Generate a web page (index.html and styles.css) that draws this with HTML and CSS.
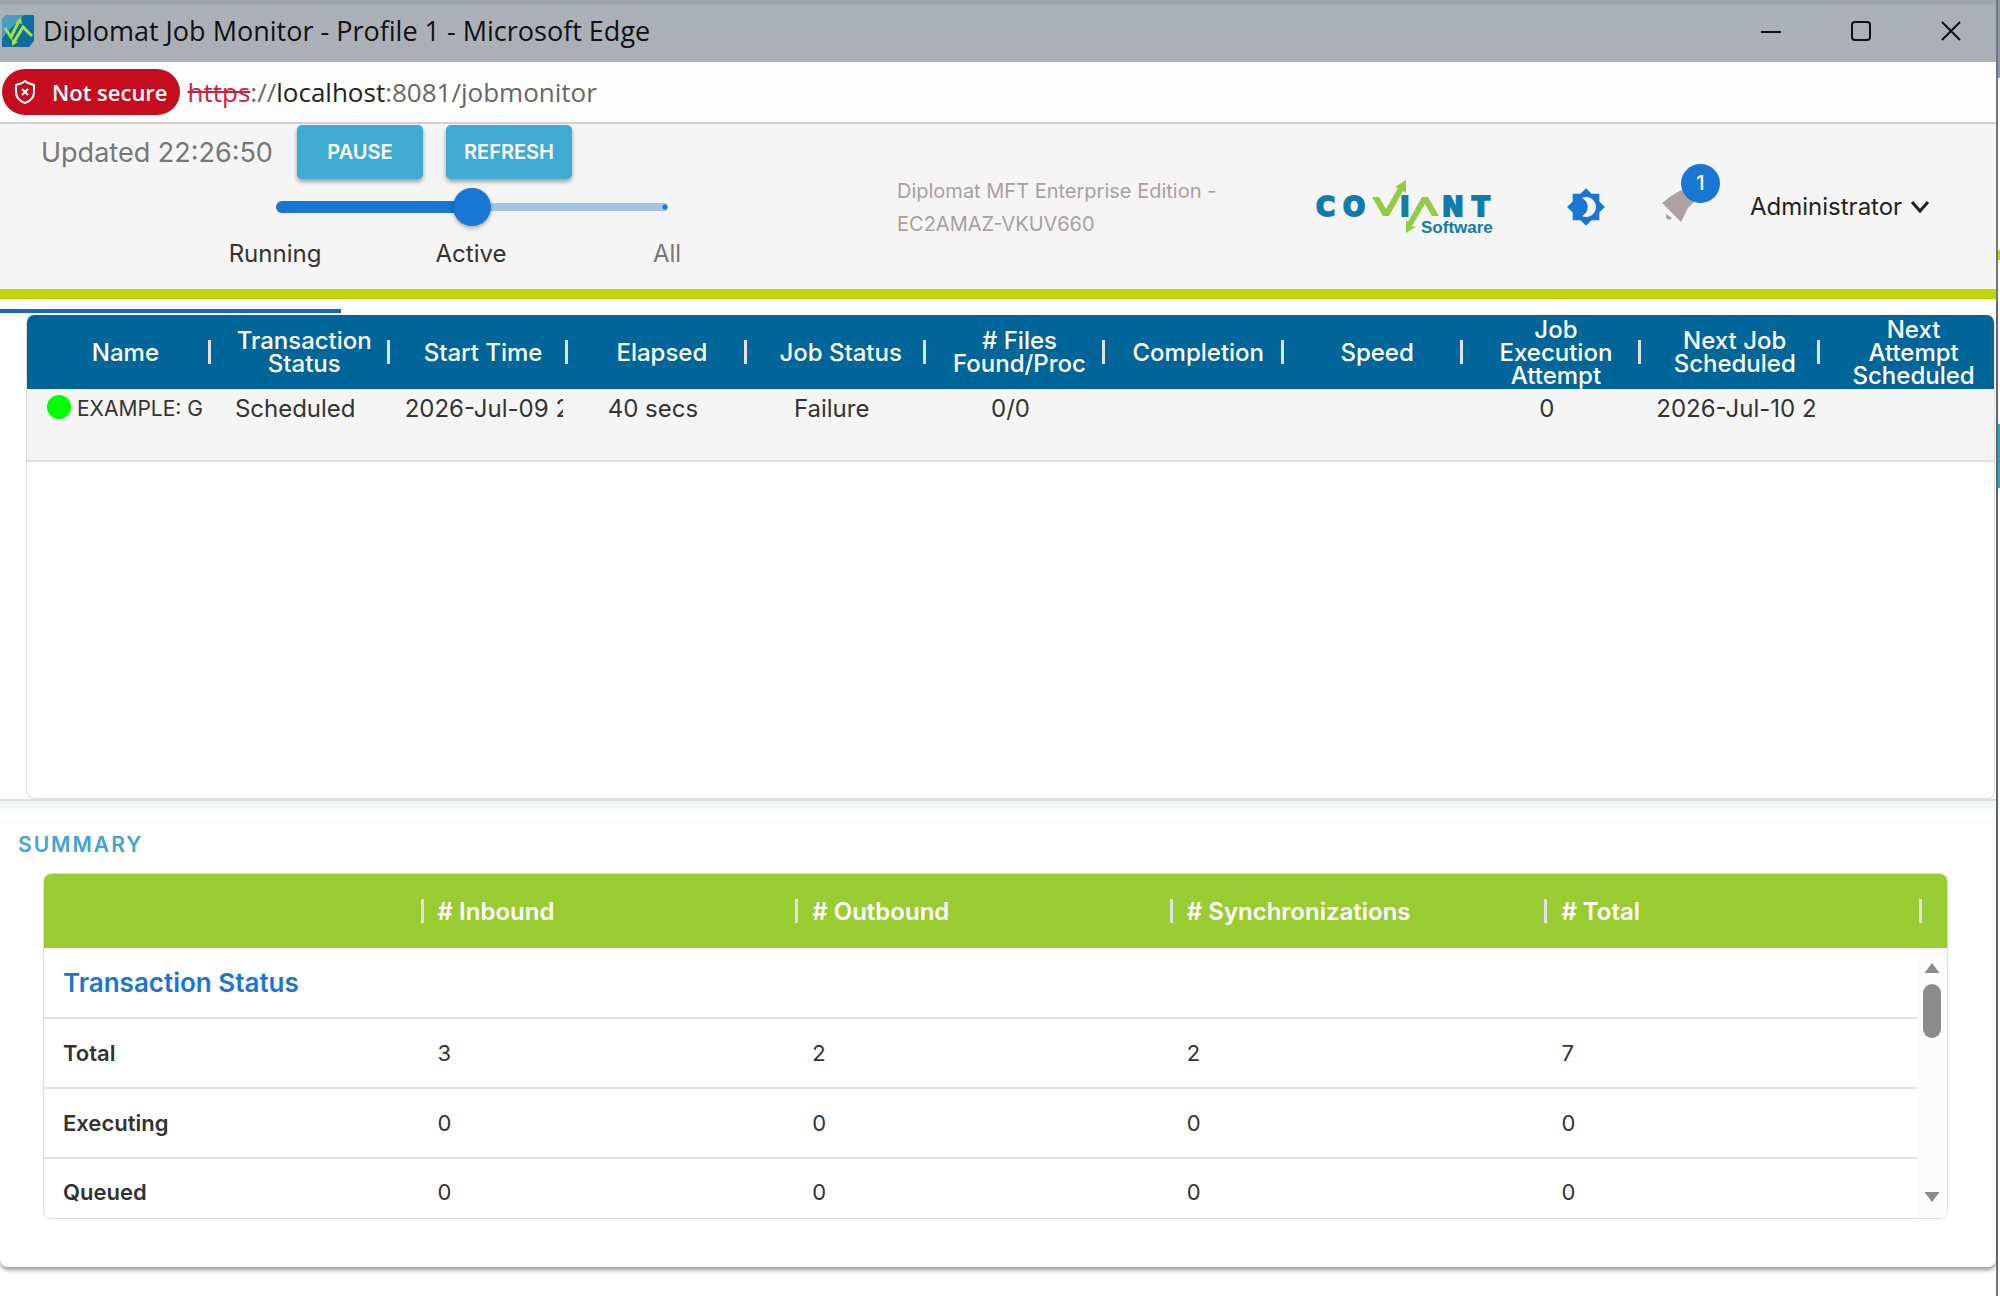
FILE: index.html
```html
<!DOCTYPE html>
<html lang="en">
<head>
    <meta charset="UTF-8">
    <meta name="viewport" content="width=device-width, initial-scale=1.0">
    <title>Diplomat Job Monitor</title>
    <link rel="stylesheet" href="styles.css">
</head>
<body>
    <div class="window">
        <!-- Title bar -->
        <div class="title-bar">
            <svg class="app-icon" viewBox="0 0 32 32">
                <path d="M4 0H32V26L27 32H0V5Z" fill="#0b6fa4"/>
                <path d="M4 0H22L4 18L0 24V5Z" fill="#4a9cc4"/>
                <path d="M3 13L9 22L17 6M12 27L21 12L30 21" fill="none" stroke="#a6e03c" stroke-width="3"/>
                <path d="M14 7L19 2L20 9ZM10 24L10 31L16 27Z" fill="#a6e03c"/>
            </svg>
            <span class="window-title">Diplomat Job Monitor - Profile 1 - Microsoft Edge</span>
            <div class="window-controls">
                <button type="button" aria-label="Minimize"><svg viewBox="0 0 20 20"><path d="M0 11H20"/></svg></button>
                <button type="button" aria-label="Maximize"><svg viewBox="0 0 20 20"><rect x="1" y="1" width="18" height="18" rx="3"/></svg></button>
                <button type="button" aria-label="Close"><svg viewBox="0 0 20 20"><path d="M1 1L19 19M19 1L1 19"/></svg></button>
            </div>
        </div>

        <!-- Address bar -->
        <div class="address-bar">
            <button type="button" class="not-secure">
                <svg viewBox="0 0 22 24">
                    <path d="M11 1L14 3L20 5V12C20 17 17 21 11 23C5 21 2 17 2 12V5L8 3Z"/>
                    <path d="M8 9L14 15M14 9L8 15"/>
                </svg>
                Not secure
            </button>
            <span class="url"><s>https</s>://<b>localhost</b>:8081/jobmonitor</span>
        </div>

        <!-- App header -->
        <header class="header">
            <div class="refresh-controls">
                <div class="refresh-row">
                    <span class="updated">Updated 22:26:50</span>
                    <button type="button" class="action-btn">PAUSE</button>
                    <button type="button" class="action-btn">REFRESH</button>
                </div>
                <input type="range" class="slider" id="job-filter" min="0" max="2" value="1" aria-label="Jobs shown">
                <div class="slider-labels">
                    <label for="job-filter">Running</label>
                    <label for="job-filter">Active</label>
                    <label for="job-filter" class="inactive">All</label>
                </div>
            </div>
            <div class="edition">Diplomat MFT Enterprise Edition -<br>EC2AMAZ-VKUV660</div>
            <svg class="logo" viewBox="0 0 180 56" role="img" aria-label="Coviant Software">
                <g class="logo-name">
                    <text x="1" y="37">C</text>
                    <text x="28" y="37">O</text>
                    <text x="85" y="37">I</text>
                    <text x="127" y="37">N</text>
                    <text x="157" y="37">T</text>
                </g>
                <text class="logo-sub" x="106" y="54">Software</text>
                <path d="M57 18H64L71 30L83 9L80 8L91 1V14L88 12L74 37H68Z" fill="#94cb45"/>
                <path d="M124 37H117L110 25L97 47L101 48L91 54V41L93 43L107 18H113Z" fill="#94cb45"/>
            </svg>
            <button type="button" class="icon-btn theme-btn" aria-label="Toggle theme">
                <svg viewBox="0 0 24 24"><path d="M20 8.69V4h-4.69L12 .69 8.69 4H4v4.69L.69 12 4 15.31V20h4.69L12 23.31 15.31 20H20v-4.69L23.31 12 20 8.69zM12 18c-.89 0-1.74-.2-2.5-.55C11.56 16.5 13 14.42 13 12s-1.44-4.5-3.5-5.45C10.26 6.2 11.11 6 12 6c3.31 0 6 2.69 6 6s-2.69 6-6 6z"/></svg>
            </button>
            <button type="button" class="icon-btn bell-btn" aria-label="Notifications">
                <svg viewBox="0 0 40 40"><path d="M1 16L10 9L20 3L34 14L27 21L20 35ZM5 27L11 31Q8 34 5 31Z"/></svg>
                <span class="badge">1</span>
            </button>
            <button type="button" class="user-menu">
                Administrator
                <svg viewBox="0 0 20 14"><path d="M2 2L10 11L18 2"/></svg>
            </button>
        </header>

        <main class="content">
            <div class="progress"><div class="progress-bar"></div></div>

            <!-- Jobs -->
            <section class="jobs">
                <table class="jobs-table">
                    <thead>
                        <tr>
                            <th>Name</th>
                            <th>Transaction Status</th>
                            <th>Start Time</th>
                            <th>Elapsed</th>
                            <th>Job Status</th>
                            <th># Files<br>Found/Proc</th>
                            <th>Completion</th>
                            <th>Speed</th>
                            <th>Job<br>Execution<br>Attempt</th>
                            <th>Next Job<br>Scheduled</th>
                            <th>Next<br>Attempt<br>Scheduled</th>
                        </tr>
                    </thead>
                    <tbody>
                        <tr>
                            <td class="job-name"><span class="dot"></span>EXAMPLE: G</td>
                            <td>Scheduled</td>
                            <td>2026-Jul-09 2</td>
                            <td>40 secs</td>
                            <td>Failure</td>
                            <td>0/0</td>
                            <td></td>
                            <td></td>
                            <td>0</td>
                            <td>2026-Jul-10 21</td>
                            <td></td>
                        </tr>
                    </tbody>
                </table>
            </section>

            <div class="splitter"></div>

            <!-- Summary -->
            <section class="summary">
                <h2>SUMMARY</h2>
                <div class="summary-grid">
                    <table class="summary-table">
                        <colgroup>
                            <col><col><col><col><col>
                            <col class="scroll-col">
                        </colgroup>
                        <thead>
                            <tr>
                                <th></th>
                                <th># Inbound</th>
                                <th># Outbound</th>
                                <th># Synchronizations</th>
                                <th># Total</th>
                                <th></th>
                            </tr>
                        </thead>
                        <tbody>
                            <tr>
                                <th colspan="5" class="group">Transaction Status</th>
                                <td rowspan="4" class="scroll-cell">
                                    <div class="scrollbar">
                                        <svg viewBox="0 0 18 12"><path d="M9 0L18 12H0Z"/></svg>
                                        <div class="thumb"></div>
                                        <svg viewBox="0 0 18 12"><path d="M0 0H18L9 12Z"/></svg>
                                    </div>
                                </td>
                            </tr>
                            <tr>
                                <th>Total</th>
                                <td>3</td>
                                <td>2</td>
                                <td>2</td>
                                <td>7</td>
                            </tr>
                            <tr>
                                <th>Executing</th>
                                <td>0</td>
                                <td>0</td>
                                <td>0</td>
                                <td>0</td>
                            </tr>
                            <tr class="last-row">
                                <th>Queued</th>
                                <td>0</td>
                                <td>0</td>
                                <td>0</td>
                                <td>0</td>
                            </tr>
                        </tbody>
                    </table>
                </div>
            </section>
        </main>
    </div>
    <div class="behind"></div>
</body>
</html>
```

FILE: styles.css
```css
* {
    box-sizing: border-box;
}
body {
    margin: 0;
    display: flex;
    min-height: 100vh;
    font-family: Inter, "Open Sans", sans-serif;
    font-size: 24px;
    color: #333;
    background-color: white;
}
button {
    border: none;
    padding: 0;
    background: none;
    font-family: inherit;
    font-size: 22px;
    cursor: pointer;
}
svg {
    display: block;
    flex: none;
}
.window {
    flex: 1;
    min-width: 0;
    display: flex;
    flex-direction: column;
    border-right: 2px solid #70757a;
    padding-bottom: 29px;
}
/* Sliver of the window underneath */
.behind {
    width: 2px;
    background: linear-gradient(#8d99a6 78px, white 78px, white 250px, #bdd802 250px, #bdd802 260px, white 260px, white 424px, #2fa3bd 424px, #2fa3bd 488px, white 488px);
}

/* Title bar */
.title-bar {
    display: flex;
    align-items: center;
    height: 62px;
    padding-left: 2px;
    background: linear-gradient(#9fa4ab 4px, #abb0b7 5px);
    font-family: "Open Sans", sans-serif;
    font-size: 27px;
    line-height: 32px;
    color: #111;
}
.app-icon {
    width: 32px;
    height: 32px;
}
.window-title {
    margin-left: 9px;
}
.window-controls {
    display: flex;
    margin-left: auto;
}
.window-controls button {
    display: flex;
    justify-content: center;
    align-items: center;
    width: 90px;
    height: 62px;
}
.window-controls svg {
    width: 20px;
    height: 20px;
    fill: none;
    stroke: #111;
    stroke-width: 2;
}

/* Address bar */
.address-bar {
    display: flex;
    align-items: center;
    gap: 8px;
    height: 62px;
    padding-left: 2px;
    border-bottom: 2px solid #d0d0d0;
    background-color: #fefefe;
    font-family: "Open Sans", sans-serif;
    font-size: 26px;
    color: #666;
}
.not-secure {
    display: flex;
    align-items: center;
    gap: 16px;
    height: 46px;
    padding: 0 12px;
    border-radius: 24px;
    background-color: #c50d1f;
    color: white;
    font-size: 22px;
    font-weight: 600;
}
.not-secure svg {
    width: 22px;
    height: 24px;
    fill: none;
    stroke: white;
    stroke-width: 2;
}
.url s {
    color: #d0213a;
}
.url b {
    font-weight: 400;
    color: #222;
}

/* Header */
.header {
    display: flex;
    align-items: center;
    height: 175px;
    border-bottom: 10px solid #bdd802;
    background-color: #f5f5f5;
}
.refresh-controls {
    width: 765px;
    align-self: flex-start;
    padding-top: 1px;
}
.refresh-row {
    display: flex;
    align-items: center;
    padding-left: 41px;
}
.updated {
    width: 256px;
    font-size: 27px;
    color: #777;
}
.action-btn {
    width: 126px;
    height: 54px;
    margin-right: 23px;
    border-radius: 5px;
    background-color: #3fabd3;
    box-shadow: 0 3px 4px rgba(0, 0, 0, 0.35);
    color: white;
    font-size: 20px;
    font-weight: 600;
}
.slider {
    display: block;
    -webkit-appearance: none;
    appearance: none;
    width: 392px;
    height: 38px;
    margin: 9px 0 13px 276px;
    background: none;
}
.slider::-webkit-slider-runnable-track {
    height: 12px;
    border-radius: 6px;
    background:
        radial-gradient(circle at 389px 6px, #1976d2 2px, transparent 3px),
        linear-gradient(#1976d2, #1976d2) left center / 50% 12px no-repeat,
        linear-gradient(#a2c5e9, #a2c5e9) right center / 100% 8px no-repeat;
}
.slider::-webkit-slider-thumb {
    -webkit-appearance: none;
    width: 38px;
    height: 38px;
    margin-top: -13px;
    border-radius: 50%;
    background-color: #1976d2;
    box-shadow: 0 2px 4px rgba(0, 0, 0, 0.35);
}
.slider-labels {
    display: grid;
    grid-template-columns: repeat(3, 196px);
    margin-left: 177px;
    line-height: 30px;
    text-align: center;
}
.slider-labels .inactive {
    color: #777;
}
.edition {
    width: 350px;
    margin-left: 132px;
    padding-top: 2px;
    font-size: 20px;
    line-height: 33px;
    color: #aaa0a0;
}
.logo {
    width: 180px;
    height: 56px;
    margin-left: 68px;
}
.logo-name {
    font-family: "DejaVu Sans", sans-serif;
    font-size: 26px;
    font-weight: 700;
    fill: #127bab;
    stroke: #127bab;
    stroke-width: 2;
}
.logo-sub {
    font-family: "Liberation Sans", sans-serif;
    font-size: 17px;
    font-weight: 700;
    fill: #127bab;
}
.icon-btn {
    position: relative;
}
.icon-btn svg {
    width: 40px;
    height: 40px;
}
.theme-btn {
    margin-left: 71px;
    fill: #1976d2;
}
.bell-btn {
    margin-left: 55px;
    fill: #aea1a1;
}
.badge {
    position: absolute;
    top: -23px;
    left: 20px;
    width: 39px;
    height: 39px;
    border-radius: 50%;
    background-color: #1976d2;
    color: white;
    font-size: 20px;
    line-height: 39px;
    font-weight: 500;
}
.user-menu {
    display: flex;
    align-items: center;
    gap: 8px;
    margin-left: 49px;
    font-size: 24px;
    color: #222;
}
.user-menu svg {
    width: 20px;
    height: 14px;
    fill: none;
    stroke: #222;
    stroke-width: 3;
}

/* Content */
.content {
    flex: 1;
    display: flex;
    flex-direction: column;
    padding-top: 10px;
    border-radius: 0 0 8px 8px;
    box-shadow: 0 3px 4px rgba(0, 0, 0, 0.4);
}
.progress {
    height: 6px;
}
.progress-bar {
    width: 341px;
    height: 4px;
    background-color: #1769c5;
}

/* Jobs table */
.jobs {
    flex: 1;
    margin: 0 1px 0 26px;
    border: 1px solid #ddd;
    border-top: none;
    border-radius: 8px;
    overflow: hidden;
}
.jobs-table {
    width: 100%;
    table-layout: fixed;
    border-collapse: collapse;
}
.jobs-table th {
    position: relative;
    height: 74px;
    padding: 0 0 0 18px;
    background-color: #00669a;
    color: white;
    font-weight: 500;
    line-height: 23px;
}
.jobs-table th:not(:last-child)::after,
.summary-table thead th:not(:last-child)::after {
    content: "";
    position: absolute;
    top: 25px;
    right: -5px;
    width: 3px;
    height: 24px;
    background-color: #e0e0e0;
    z-index: 1;
}
.jobs-table td {
    height: 72px;
    padding: 0 20px;
    border-bottom: 2px solid #e0e0e0;
    background-color: #f5f5f5;
    line-height: 39px;
    text-align: center;
    vertical-align: top;
    white-space: nowrap;
    overflow: hidden;
}
.jobs-table .job-name {
    padding-right: 0;
    font-size: 21px;
    text-align: left;
}
.dot {
    display: inline-block;
    width: 24px;
    height: 24px;
    margin-right: 6px;
    border-radius: 50%;
    background-color: #00ff00;
    vertical-align: -3px;
}
.splitter {
    height: 24px;
    border-top: 2px solid #ddd;
    border-bottom: 2px solid #f9f9f9;
    background: linear-gradient(#f5f6f7 8px, white 9px);
}

/* Summary */
.summary {
    padding: 0 48px 48px 43px;
}
.summary h2 {
    margin: 6px 0 12px -25px;
    font-size: 21px;
    line-height: 32px;
    font-weight: 600;
    letter-spacing: 2px;
    color: #3fa5cc;
}
.summary-grid {
    border: 1px solid #ddd;
    border-radius: 8px;
    overflow: hidden;
}
.summary-table {
    width: 100%;
    table-layout: fixed;
    border-collapse: collapse;
    text-align: left;
    font-size: 22px;
}
.summary-table .scroll-col {
    width: 30px;
}
.summary-table th,
.summary-table td {
    height: 70px;
    padding: 0 19px;
    border-bottom: 2px solid #e0e0e0;
}
.summary-table th {
    font-weight: 600;
}
.summary-table thead th {
    position: relative;
    height: 74px;
    border-bottom: none;
    background-color: #99cc33;
    color: white;
    font-size: 24px;
}
.summary-table .group {
    font-size: 26px;
    color: #1976d2;
}
.summary-table .last-row th,
.summary-table .last-row td {
    height: 60px;
    padding-top: 7px;
    border-bottom: none;
}
.summary-table .scroll-cell {
    padding: 0;
    border-bottom: none;
    background-color: #fcfcfc;
    vertical-align: top;
}
.scrollbar {
    display: flex;
    flex-direction: column;
    align-items: center;
    padding-top: 15px;
}
.scrollbar svg {
    width: 18px;
    height: 10px;
    fill: #8b8b8b;
}
.thumb {
    width: 18px;
    height: 54px;
    margin: 11px 0 154px;
    border-radius: 9px;
    background-color: #8b8b8b;
}
```
